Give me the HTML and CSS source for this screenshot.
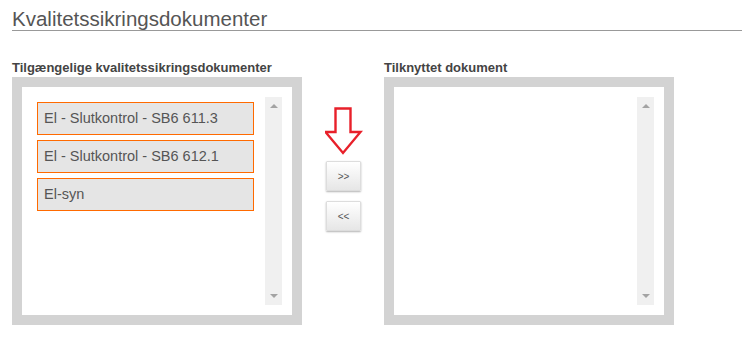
FILE: index.html
```html
<!DOCTYPE html>
<html lang="en">
<head>
    <meta charset="UTF-8">
    <meta name="viewport" content="width=device-width, initial-scale=1.0">
    <title>Kvalitetssikringsdokumenter</title>
    <link rel="stylesheet" href="styles.css">
</head>
<body>

    <div class="page">
        <h1 class="page-title">Kvalitetssikringsdokumenter</h1>

        <div class="panels">
            <div class="panel">
                <div class="panel-label">Tilgængelige kvalitetssikringsdokumenter</div>
                <div class="panel-box">
                    <div class="doc-list">
                        <div class="doc-item">El - Slutkontrol - SB6 611.3</div>
                        <div class="doc-item">El - Slutkontrol - SB6 612.1</div>
                        <div class="doc-item">El-syn</div>
                    </div>
                    <div class="scrollbar">
                        <span class="arrow-up"></span>
                        <span class="arrow-down"></span>
                    </div>
                </div>
            </div>

            <div class="mover">
                <svg class="hint-arrow" width="38" height="48" viewBox="0 0 38 48">
                    <path d="M10.5 1.5 H25.5 V25 H35.5 L18 46 L0.5 25 H10.5 Z" fill="#fff" stroke="#e8202a" stroke-width="2.4" stroke-linejoin="miter"/>
                </svg>
                <button class="move-btn">&gt;&gt;</button>
                <button class="move-btn">&lt;&lt;</button>
            </div>

            <div class="panel">
                <div class="panel-label">Tilknyttet dokument</div>
                <div class="panel-box">
                    <div class="doc-list"></div>
                    <div class="scrollbar">
                        <span class="arrow-up"></span>
                        <span class="arrow-down"></span>
                    </div>
                </div>
            </div>
        </div>
    </div>

</body>
</html>
```

FILE: styles.css
```css
body {
    margin: 0;
    font-family: "Liberation Sans", Arial, sans-serif;
    background-color: #fff;
    color: #555;
}

.page {
    padding: 0 0 0 12px;
}

.page-title {
    margin: 0;
    padding-top: 8px;
    height: 22px;
    font-size: 20.5px;
    font-weight: normal;
    line-height: 22px;
    color: #555;
    border-bottom: 1px solid #999;
}

.panels {
    display: flex;
    margin-top: 29px;
}

.panel {
    width: 290px;
}

.panel-label {
    font-size: 13px;
    font-weight: bold;
    line-height: 16px;
    color: #444;
    margin-bottom: 1px;
}

.panel-box {
    display: flex;
    height: 208px;
    padding: 10px;
    border: 10px solid #d3d3d3;
    background-color: #fff;
}

.doc-list {
    flex: 1;
    padding: 5px;
}

.doc-item {
    width: 209px;
    height: 31px;
    line-height: 31px;
    padding-left: 6px;
    margin-bottom: 5px;
    font-size: 14.5px;
    color: #555;
    background-color: #e5e5e5;
    border: 1px solid #ff6a00;
}

.scrollbar {
    width: 17px;
    background-color: #f0f0f0;
    display: flex;
    flex-direction: column;
    justify-content: space-between;
    align-items: center;
    padding: 7px 0;
}

.arrow-up {
    width: 0;
    height: 0;
    border-left: 4px solid transparent;
    border-right: 4px solid transparent;
    border-bottom: 4px solid #a3a3a3;
}

.arrow-down {
    width: 0;
    height: 0;
    border-left: 4px solid transparent;
    border-right: 4px solid transparent;
    border-top: 4px solid #a3a3a3;
}

.mover {
    width: 82px;
    display: flex;
    flex-direction: column;
    align-items: center;
    padding-top: 47px;
}

.hint-arrow {
    display: block;
    margin-left: 1px;
    margin-bottom: 6px;
}

.move-btn {
    width: 35px;
    height: 30px;
    margin-bottom: 10px;
    margin-left: 1px;
    font-family: "Liberation Sans", Arial, sans-serif;
    font-size: 10px;
    color: #555;
    border: 1px solid #ddd;
    border-radius: 1px;
    background: linear-gradient(#fff, #e6e6e6);
    box-shadow: 0 1px 2px rgba(0, 0, 0, 0.3);
    cursor: pointer;
}
```
